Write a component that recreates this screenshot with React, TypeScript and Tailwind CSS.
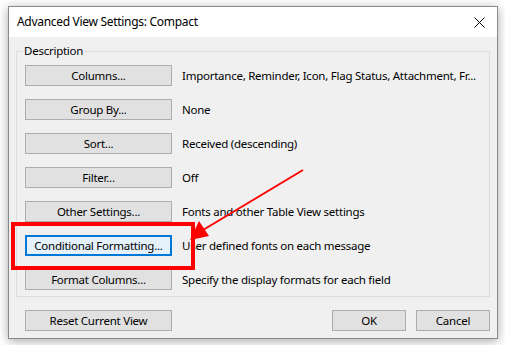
import React from "react";

const rows = [
  { label: "Columns...", text: "Importance, Reminder, Icon, Flag Status, Attachment, Fr..." },
  { label: "Group By...", text: "None" },
  { label: "Sort...", text: "Received (descending)" },
  { label: "Filter...", text: "Off" },
  { label: "Other Settings...", text: "Fonts and other Table View settings" },
  { label: "Conditional Formatting...", text: "User defined fonts on each message", focused: true },
  { label: "Format Columns...", text: "Specify the display formats for each field" },
];

function WinButton({ label, focused, width }: { label: string; focused?: boolean; width: string }) {
  return (
    <button
      className={
        focused
          ? `${width} h-[21px] flex items-center justify-center bg-[#e5f1fb] border-2 border-[#0078d7] text-black text-[11.5px] tracking-[-0.25px] leading-none`
          : `${width} h-[21px] flex items-center justify-center bg-[#e1e1e1] border border-[#adadad] text-black text-[11.5px] tracking-[-0.25px] leading-none`
      }>
      {label}
    </button>
  );
}

export default function App() {
  return (
    <div
      className="relative w-[505px] h-[345px] bg-white pt-[6px] pl-[8px] overflow-hidden"
      style={{ fontFamily: '"Noto Sans", "Open Sans", sans-serif' }}>
      <div className="w-[490px] h-[333px] border border-[#8a8a8a] bg-[#f0f0f0] shadow-[0_2px_10px_rgba(0,0,0,0.35)] flex flex-col">
        {/* title bar */}
        <div className="h-[30px] bg-white flex items-center justify-between pl-[8px] pr-[12px]">
          <span className="text-[12px] tracking-[-0.3px] text-black">Advanced View Settings: Compact</span>
          <svg width="11" height="11" viewBox="0 0 11 11">
            <path d="M0.5 0.5 L10.5 10.5 M10.5 0.5 L0.5 10.5" stroke="#000" strokeWidth="1" />
          </svg>
        </div>

        <div className="flex flex-col px-[7px] pt-[6px]">
          <fieldset className="border border-[#dcdcdc] pl-[8px] pr-[8px] pb-[6px]">
            <legend className="ml-[-2px] px-[1px] text-[11.5px] tracking-[-0.25px] leading-[16px] text-black">Description</legend>
            <div className="flex flex-col gap-[13px] pt-[6px]">
              {rows.map((r) => (
                <div key={r.label} className="flex items-center gap-[10px]">
                  <WinButton label={r.label} focused={r.focused} width="w-[147px]" />
                  <span className="text-[11.5px] tracking-[-0.25px] text-black whitespace-nowrap">{r.text}</span>
                </div>
              ))}
            </div>
          </fieldset>

          <div className="flex items-center mt-[13px] pl-[9px]">
            <WinButton label="Reset Current View" width="w-[147px]" />
            <div className="ml-auto flex gap-[10px]">
              <WinButton label="OK" width="w-[74px]" />
              <WinButton label="Cancel" width="w-[74px]" />
            </div>
          </div>
        </div>
      </div>

      {/* annotation overlay */}
      <div className="absolute left-[11px] top-[222px] w-[184px] h-[48px] border-4 border-[#ff0000]" />
      <svg className="absolute left-0 top-0" width="505" height="345" viewBox="0 0 505 345">
        <line x1="303" y1="170" x2="203" y2="230" stroke="#ff0000" strokeWidth="2" />
        <polygon points="190,240 199,221 209,236" fill="#ff0000" />
      </svg>
    </div>
  );
}
